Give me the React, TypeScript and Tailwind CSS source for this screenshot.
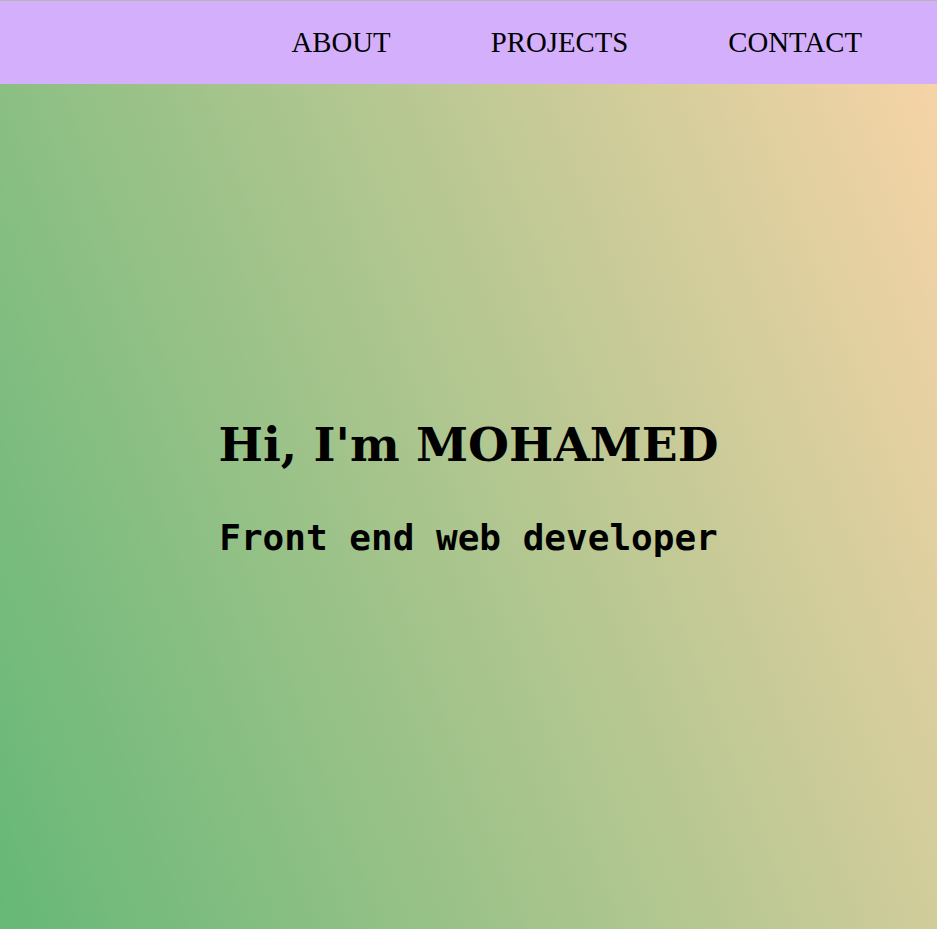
export default function App() {
  return (
    <div className="min-h-[929px] flex flex-col bg-[linear-gradient(69deg,#66b877,#f9d4a8)]">
      {/* NAVBAR */}
      <nav className="h-[84px] shrink-0 border-t border-[#b5b5b5] bg-[#d4b0fc] flex items-center justify-end pr-[75px]">
        <ul className="flex gap-[100px] pt-[1px] font-['Liberation_Serif',serif] text-[28.8px] text-black">
          <li>ABOUT</li>
          <li>PROJECTS</li>
          <li>CONTACT</li>
        </ul>
      </nav>

      {/* HERO */}
      <section className="flex-1 flex flex-col items-center justify-center pb-[32px]">
        <h1 className="font-['DejaVu_Serif',serif] font-bold text-[47px] leading-tight text-black">
          Hi, I'm MOHAMED
        </h1>
        <p className="mt-[37px] font-['DejaVu_Sans_Mono',monospace] font-bold text-[36px] text-black">
          Front end web developer
        </p>
      </section>
    </div>
  );
}
